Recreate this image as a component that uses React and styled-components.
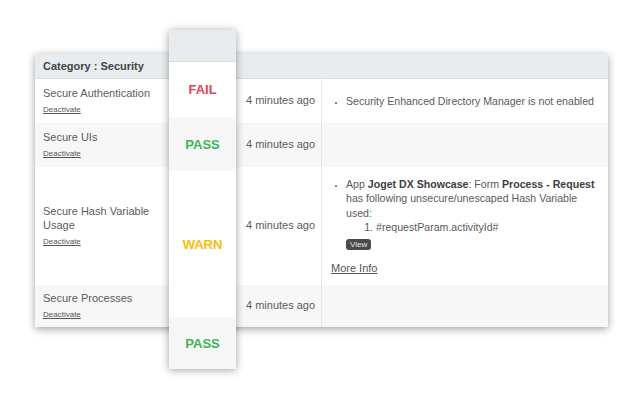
import React from "react";
import styled, { createGlobalStyle } from "styled-components";

const Global = createGlobalStyle`
  html, body { margin: 0; padding: 0; background: #fff; }
  body { font-family: "Liberation Sans", Arial, sans-serif; color: #555; }
`;

const Page = styled.div`
  width: 640px;
  height: 397px;
  padding: 54px 0 0 35px;
  box-sizing: border-box;
  background: #fff;
`;

const Card = styled.div`
  position: relative;
  width: 573px;
  background: #fff;
  box-shadow: 0 2px 8px rgba(0, 0, 0, 0.38);
  display: grid;
  grid-template-columns: 134px 67px 86px 1fr;
  grid-template-rows: 25px 44px 44px 118px 42px;
  font-size: 11px;
`;

const Header = styled.div`
  grid-column: 1 / -1;
  background: #e9ecee;
  border-bottom: 1px solid #dadfe2;
  display: flex;
  align-items: center;
  padding-left: 8px;
  font-weight: bold;
  color: #444;
  font-size: 11px;
`;

const Cell = styled.div`
  background: ${(p) => (p.$alt ? "#f7f7f7" : "#fff")};
  display: flex;
  flex-direction: column;
  justify-content: center;
  align-items: flex-start;
  padding: ${(p) => p.$pad || "0"};
  border-right: ${(p) => (p.$border ? "1px solid #e6e6e6" : "none")};
  line-height: 13.5px;
  color: #5a5a5a;
  font-size: ${(p) => p.$fs || "11px"};
`;

const Title = styled.div`
  font-size: 11px;
  color: #5c5c5c;
`;

const Deactivate = styled.a`
  font-size: 8px;
  color: #555;
  text-decoration: underline;
  margin-top: 5px;
  line-height: 10px;
  cursor: pointer;
`;

const List = styled.ul`
  margin: 0;
  padding-left: 15px;
  list-style: disc;
  line-height: 14.5px;
  & > li::marker { font-size: 8px; }
`;

const SubList = styled.ol`
  margin: 0;
  padding-left: 30px;
  line-height: 14.5px;
`;

const Strong = styled.b`
  color: #3d3d3d;
`;

const ViewButton = styled.span`
  display: inline-block;
  margin-top: 4px;
  background: #4a4a4a;
  color: #e8e8e8;
  font-size: 8px;
  line-height: 11px;
  height: 11px;
  padding: 0 4px;
  border-radius: 3px;
`;

const MoreInfo = styled.a`
  margin-top: 11px;
  color: #555;
  text-decoration: underline;
  font-size: 11px;
  line-height: 14px;
`;

const Floating = styled.div`
  position: absolute;
  left: 134px;
  top: -24px;
  width: 67px;
  background: #fff;
  box-shadow: 0 1px 8px rgba(0, 0, 0, 0.38);
  display: grid;
  grid-template-rows: 32px 55px 54px 146px 52px;
`;

const FloatHead = styled.div`
  background: #e9ecee;
  border-bottom: 1px solid #dadfe2;
`;

const colors = { FAIL: "#e8405c", PASS: "#3cb556", WARN: "#fbbd0c" };

const Status = styled.div`
  background: ${(p) => (p.$alt ? "#f6f6f6" : "#fff")};
  display: flex;
  align-items: center;
  justify-content: center;
  font-weight: bold;
  font-size: 13px;
  color: ${(p) => colors[p.$s]};
`;

const rows = [
  { title: "Secure Authentication", status: "FAIL" },
  { title: "Secure UIs", status: "PASS", alt: true },
  { title: "Secure Hash Variable Usage", status: "WARN" },
  { title: "Secure Processes", status: "PASS", alt: true },
];

function Details({ i }) {
  if (i === 0)
    return (
      <List>
        <li>Security Enhanced Directory Manager is not enabled</li>
      </List>
    );
  if (i === 2)
    return (
      <>
        <List>
          <li>
            App <Strong>Joget DX Showcase</Strong>: Form{" "}
            <Strong>Process - Request</Strong> has following
            unsecure/unescaped Hash Variable used:
            <SubList>
              <li>#requestParam.activityId#</li>
            </SubList>
            <ViewButton>View</ViewButton>
          </li>
        </List>
        <MoreInfo>More Info</MoreInfo>
      </>
    );
  return null;
}

export default function App() {
  return (
    <Page>
      <Global />
      <Card>
        <Header>Category : Security</Header>
        {rows.map((r, i) => (
          <React.Fragment key={i}>
            <Cell $alt={r.alt} $pad="0 8px">
              <Title>{r.title}</Title>
              <Deactivate>Deactivate</Deactivate>
            </Cell>
            <Cell $alt={r.alt} />
            <Cell $alt={r.alt} $pad="0 0 0 10px" $border>
              4 minutes ago
            </Cell>
            <Cell $alt={r.alt} $pad="0 2px 0 9px" $fs="10.6px">
              <Details i={i} />
            </Cell>
          </React.Fragment>
        ))}
        <Floating>
          <FloatHead />
          {rows.map((r, i) => (
            <Status key={i} $alt={r.alt} $s={r.status}>
              {r.status}
            </Status>
          ))}
        </Floating>
      </Card>
    </Page>
  );
}
